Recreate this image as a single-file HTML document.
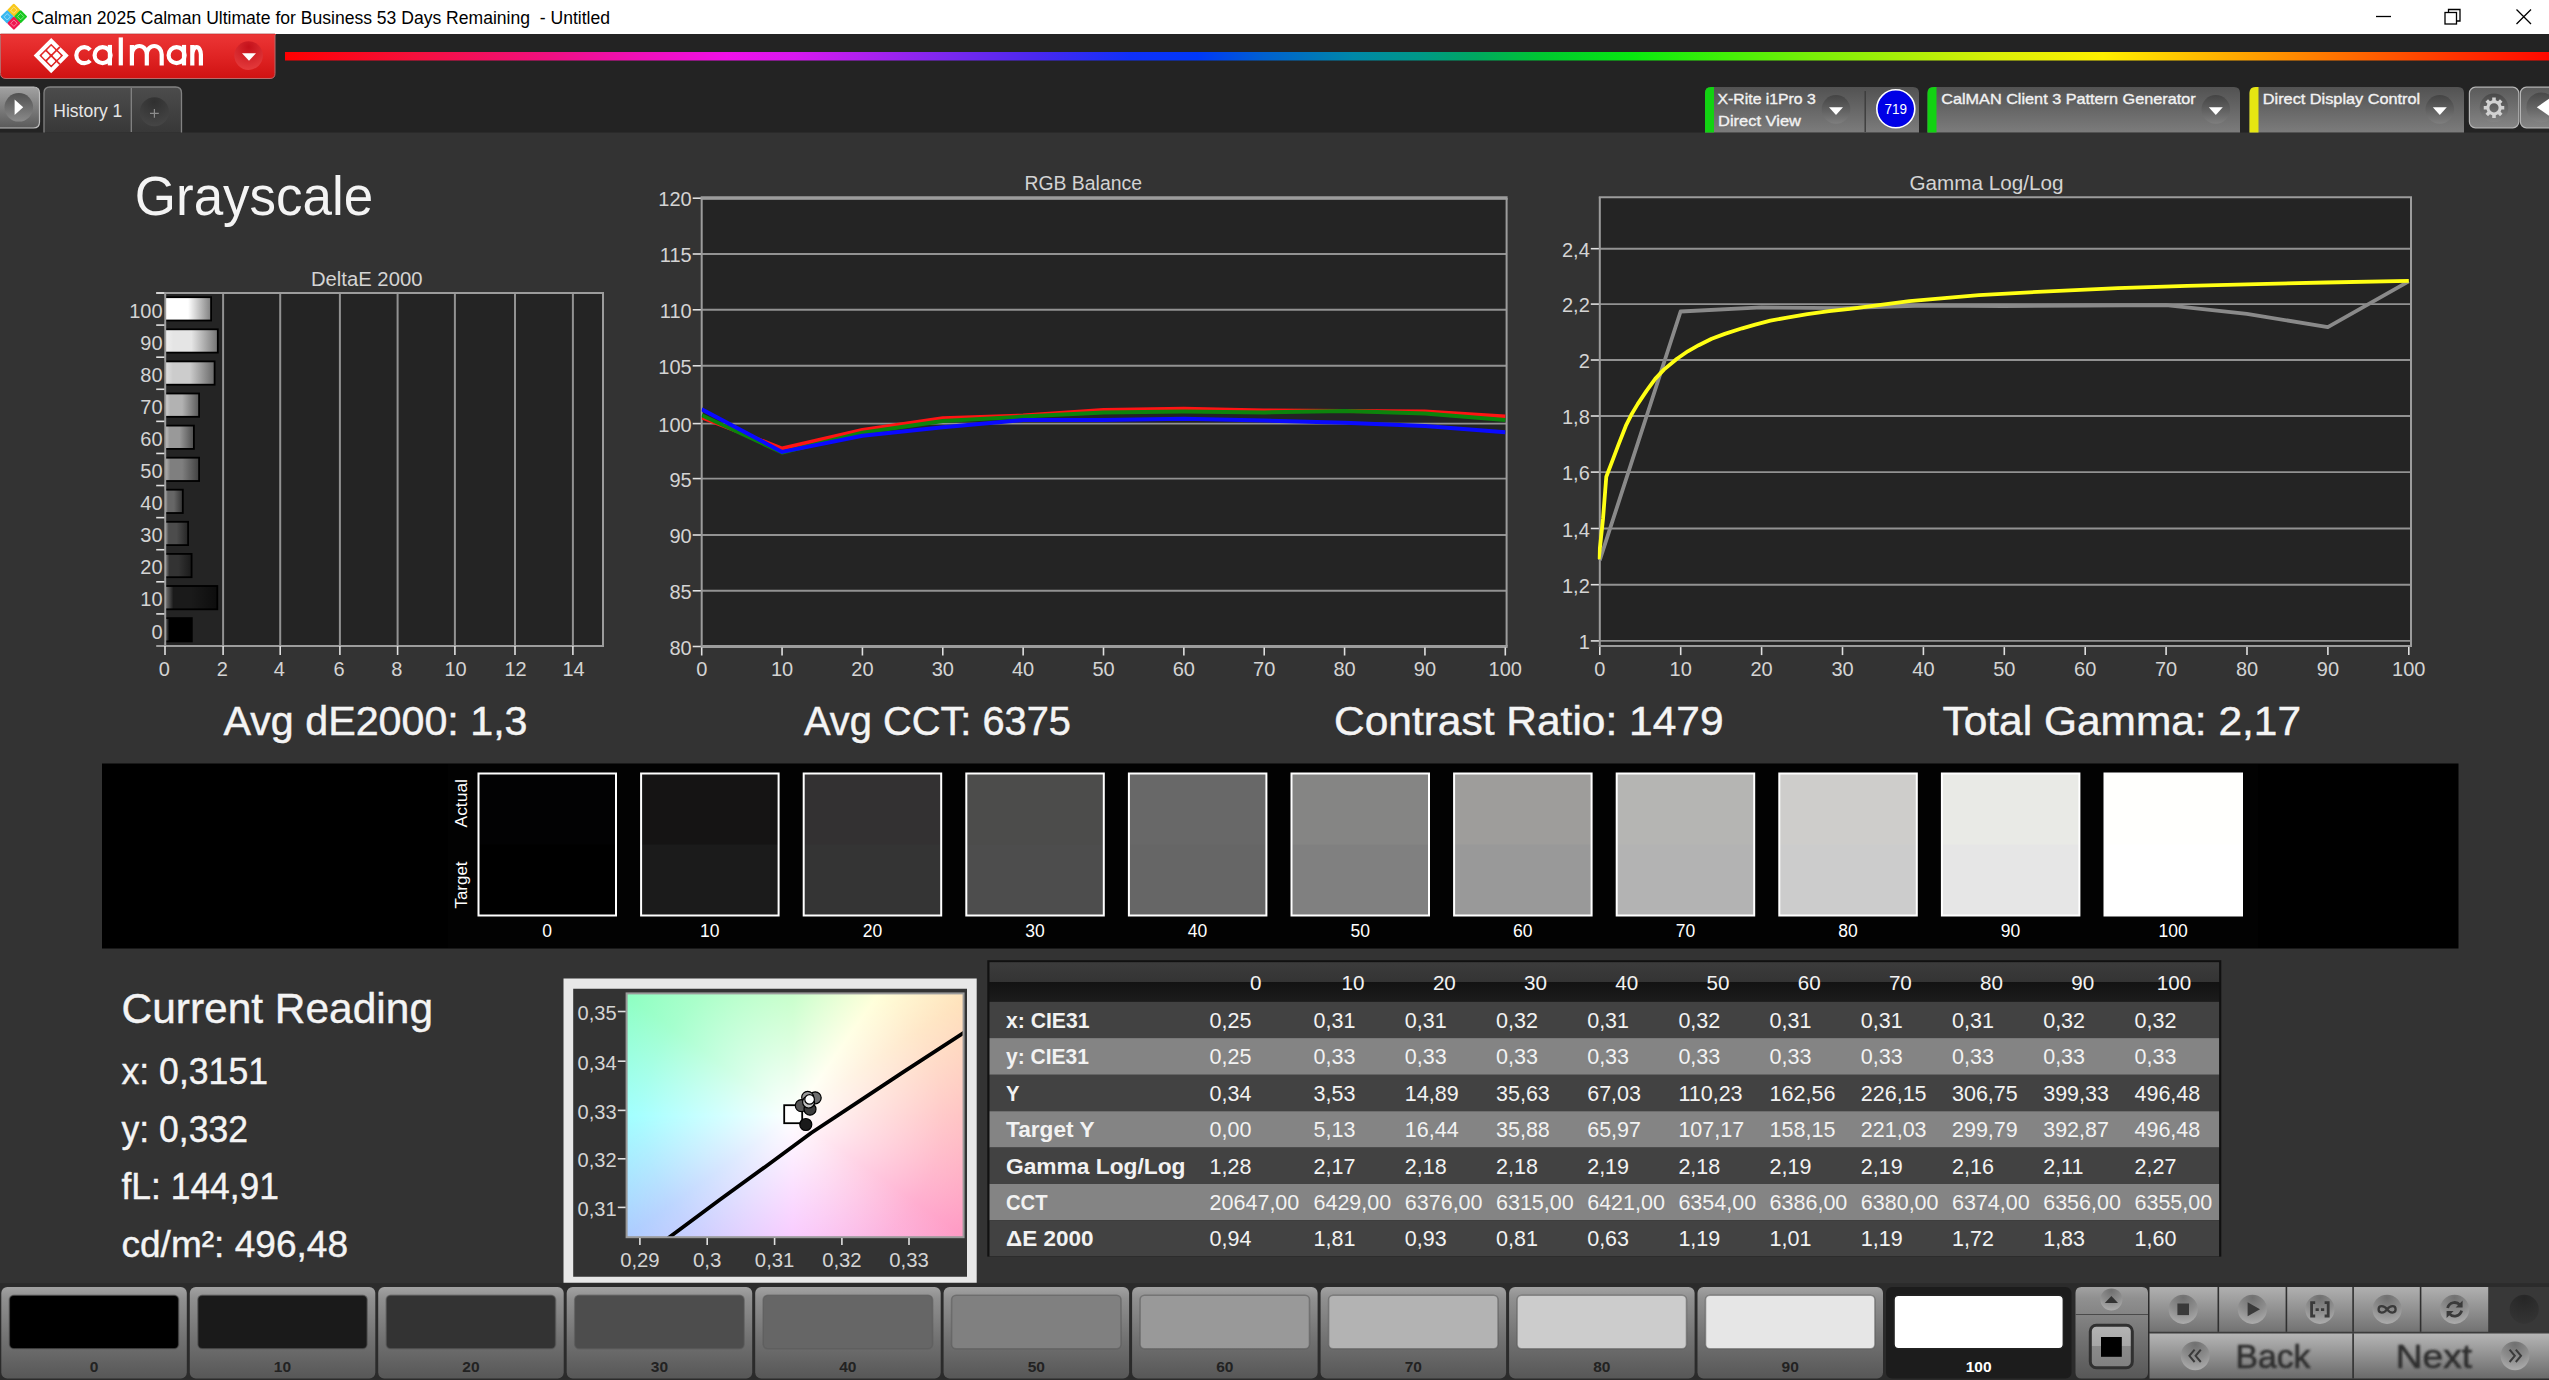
<!DOCTYPE html>
<html><head><meta charset="utf-8"><title>Calman 2025 - Grayscale</title>
<style>
html,body{margin:0;padding:0;background:#333;overflow:hidden}
body{width:2549px;height:1380px;position:relative;font-family:"Liberation Sans", sans-serif}
#cie{position:absolute;left:627px;top:994px;width:336px;height:243px;
background:
 radial-gradient(circle at 166px 122px, rgba(255,255,255,1) 0px, rgba(255,255,255,.66) 70px, rgba(255,255,255,.3) 150px, rgba(255,255,255,0) 245px),
 conic-gradient(from 0deg at 166px 122px, rgb(160,255,165) 0deg, rgb(255,255,200) 35deg, rgb(255,222,178) 56deg, rgb(255,178,178) 90deg, rgb(255,140,188) 125deg, rgb(244,165,255) 180deg, rgb(160,196,255) 234deg, rgb(130,255,255) 270deg, rgb(125,255,185) 306deg, rgb(160,255,165) 360deg);}
svg{position:absolute;left:0;top:0}
text{font-family:"Liberation Sans", sans-serif}
</style></head><body>
<div id="cie"></div>
<svg width="2549" height="1380" viewBox="0 0 2549 1380">
<defs>
<linearGradient id="spec" x1="0" y1="0" x2="1" y2="0"><stop offset="0" stop-color="#ff0000"/><stop offset="0.057" stop-color="#f5103c"/><stop offset="0.116" stop-color="#f01080"/><stop offset="0.156" stop-color="#f010b8"/><stop offset="0.195" stop-color="#f010e8"/><stop offset="0.225" stop-color="#d818f0"/><stop offset="0.254" stop-color="#b020f0"/><stop offset="0.294" stop-color="#7828f0"/><stop offset="0.333" stop-color="#4828f0"/><stop offset="0.373" stop-color="#1030f8"/><stop offset="0.403" stop-color="#0038f8"/><stop offset="0.432" stop-color="#0060d0"/><stop offset="0.472" stop-color="#0088a8"/><stop offset="0.501" stop-color="#009888"/><stop offset="0.526" stop-color="#00a860"/><stop offset="0.556" stop-color="#00c830"/><stop offset="0.595" stop-color="#08e810"/><stop offset="0.635" stop-color="#40f008"/><stop offset="0.674" stop-color="#78f008"/><stop offset="0.714" stop-color="#a8f008"/><stop offset="0.753" stop-color="#d8f008"/><stop offset="0.803" stop-color="#fff000"/><stop offset="0.842" stop-color="#ffc000"/><stop offset="0.882" stop-color="#ff9000"/><stop offset="0.921" stop-color="#ff6000"/><stop offset="0.961" stop-color="#ff3000"/><stop offset="1" stop-color="#ff0800"/></linearGradient>
<linearGradient id="specsh" x1="0" y1="0" x2="0" y2="1"><stop offset="0" stop-color="#232323"/><stop offset="0.18" stop-color="#232323"/><stop offset="0.18" stop-color="rgba(35,35,35,0)"/><stop offset="0.85" stop-color="rgba(35,35,35,0)"/><stop offset="1" stop-color="rgba(35,35,35,.6)"/></linearGradient>
<linearGradient id="redb" x1="0" y1="0" x2="0" y2="1"><stop offset="0" stop-color="#ec3636"/><stop offset="0.5" stop-color="#e02424"/><stop offset="1" stop-color="#cf1212"/></linearGradient>
<radialGradient id="redc" cx=".5" cy=".2" r=".9"><stop offset="0" stop-color="#c4101a"/><stop offset="1" stop-color="#e84040"/></radialGradient>
<linearGradient id="playb" x1="0" y1="0" x2="0" y2="1"><stop offset="0" stop-color="#a2a2a2"/><stop offset="1" stop-color="#5a5a5a"/></linearGradient>
<linearGradient id="pcirc" x1="0" y1="0" x2="0" y2="1"><stop offset="0" stop-color="#505050"/><stop offset="1" stop-color="#8a8a8a"/></linearGradient>
<linearGradient id="htab" x1="0" y1="0" x2="0" y2="1"><stop offset="0" stop-color="#4c4c4c"/><stop offset="1" stop-color="#383838"/></linearGradient>
<radialGradient id="hcirc" cx=".5" cy=".15" r=".95"><stop offset="0" stop-color="#303030"/><stop offset="1" stop-color="#484848"/></radialGradient>
<linearGradient id="dtab" x1="0" y1="0" x2="0" y2="1"><stop offset="0" stop-color="#525252"/><stop offset="1" stop-color="#7c7c7c"/></linearGradient>
<linearGradient id="dcirc" x1="0" y1="0" x2="0" y2="1"><stop offset="0" stop-color="#444444"/><stop offset="0.55" stop-color="#626262"/><stop offset="1" stop-color="#7e7e7e"/></linearGradient>
<linearGradient id="gbtn" x1="0" y1="0" x2="0" y2="1"><stop offset="0" stop-color="#5a5a5a"/><stop offset="1" stop-color="#858585"/></linearGradient>
<linearGradient id="gcirc" x1="0" y1="0" x2="0" y2="1"><stop offset="0" stop-color="#484848"/><stop offset="0.55" stop-color="#666666"/><stop offset="1" stop-color="#848484"/></linearGradient>
<linearGradient id="bar100" x1="0" y1="0" x2="1" y2="0"><stop offset="0" stop-color="#ffffff"/><stop offset="0.16" stop-color="#ffffff"/><stop offset="0.5" stop-color="#ffffff"/><stop offset="1" stop-color="#7f7f7f"/></linearGradient>
<linearGradient id="bar90" x1="0" y1="0" x2="1" y2="0"><stop offset="0" stop-color="#f0f0f0"/><stop offset="0.16" stop-color="#e5e5e5"/><stop offset="0.5" stop-color="#e5e5e5"/><stop offset="1" stop-color="#737373"/></linearGradient>
<linearGradient id="bar80" x1="0" y1="0" x2="1" y2="0"><stop offset="0" stop-color="#e1e1e1"/><stop offset="0.16" stop-color="#cccccc"/><stop offset="0.5" stop-color="#cccccc"/><stop offset="1" stop-color="#666666"/></linearGradient>
<linearGradient id="bar70" x1="0" y1="0" x2="1" y2="0"><stop offset="0" stop-color="#d3d3d3"/><stop offset="0.16" stop-color="#b2b2b2"/><stop offset="0.5" stop-color="#b2b2b2"/><stop offset="1" stop-color="#595959"/></linearGradient>
<linearGradient id="bar60" x1="0" y1="0" x2="1" y2="0"><stop offset="0" stop-color="#c4c4c4"/><stop offset="0.16" stop-color="#999999"/><stop offset="0.5" stop-color="#999999"/><stop offset="1" stop-color="#4c4c4c"/></linearGradient>
<linearGradient id="bar50" x1="0" y1="0" x2="1" y2="0"><stop offset="0" stop-color="#b5b5b5"/><stop offset="0.16" stop-color="#7f7f7f"/><stop offset="0.5" stop-color="#7f7f7f"/><stop offset="1" stop-color="#404040"/></linearGradient>
<linearGradient id="bar40" x1="0" y1="0" x2="1" y2="0"><stop offset="0" stop-color="#a6a6a6"/><stop offset="0.16" stop-color="#666666"/><stop offset="0.5" stop-color="#666666"/><stop offset="1" stop-color="#333333"/></linearGradient>
<linearGradient id="bar30" x1="0" y1="0" x2="1" y2="0"><stop offset="0" stop-color="#979797"/><stop offset="0.16" stop-color="#4c4c4c"/><stop offset="0.5" stop-color="#4c4c4c"/><stop offset="1" stop-color="#262626"/></linearGradient>
<linearGradient id="bar20" x1="0" y1="0" x2="1" y2="0"><stop offset="0" stop-color="#898989"/><stop offset="0.16" stop-color="#333333"/><stop offset="0.5" stop-color="#333333"/><stop offset="1" stop-color="#1a1a1a"/></linearGradient>
<linearGradient id="bar10" x1="0" y1="0" x2="1" y2="0"><stop offset="0" stop-color="#7a7a7a"/><stop offset="0.16" stop-color="#1a1a1a"/><stop offset="0.5" stop-color="#1a1a1a"/><stop offset="1" stop-color="#0d0d0d"/></linearGradient>
<linearGradient id="bar0" x1="0" y1="0" x2="1" y2="0"><stop offset="0" stop-color="#6b6b6b"/><stop offset="0.16" stop-color="#000000"/><stop offset="0.5" stop-color="#000000"/><stop offset="1" stop-color="#000000"/></linearGradient>
<linearGradient id="thead" x1="0" y1="0" x2="0" y2="1"><stop offset="0" stop-color="#3c3c3c"/><stop offset="0.49" stop-color="#343434"/><stop offset="0.5" stop-color="#121212"/><stop offset="1" stop-color="#1c1c1c"/></linearGradient>
<linearGradient id="lvb" x1="0" y1="0" x2="0" y2="1"><stop offset="0" stop-color="#a2a2a2"/><stop offset="0.12" stop-color="#909090"/><stop offset="0.6" stop-color="#707070"/><stop offset="1" stop-color="#575757"/></linearGradient>
<linearGradient id="bbtn" x1="0" y1="0" x2="0" y2="1"><stop offset="0" stop-color="#b0b0b0"/><stop offset="1" stop-color="#727272"/></linearGradient>
<linearGradient id="bbtn2" x1="0" y1="0" x2="0" y2="1"><stop offset="0" stop-color="#b6b6b6"/><stop offset="1" stop-color="#6a6a6a"/></linearGradient>
<radialGradient id="bcirc" cx=".5" cy=".1" r="1"><stop offset="0" stop-color="#707070"/><stop offset=".5" stop-color="#8c8c8c"/><stop offset="1" stop-color="#b4b4b4"/></radialGradient>
<linearGradient id="stopin" x1="0" y1="0" x2="0" y2="1"><stop offset="0" stop-color="#b4b4b4"/><stop offset="0.5" stop-color="#a6a6a6"/><stop offset="0.5" stop-color="#8a8a8a"/><stop offset="1" stop-color="#808080"/></linearGradient>
<radialGradient id="dkc" cx=".5" cy=".1" r="1"><stop offset="0" stop-color="#262626"/><stop offset="1" stop-color="#363636"/></radialGradient>
<filter id="blur1" x="-10%" y="-20%" width="120%" height="140%"><feGaussianBlur stdDeviation="0.9"/></filter>
</defs>
<rect x="0" y="0" width="2549" height="34" fill="#ffffff"/>
<path d="M13.8 4.799999999999999 L19.200000000000003 10.2 L13.8 15.6 L8.4 10.2 Z" fill="#f8c81c" stroke="#f8c81c" stroke-width="2" stroke-linejoin="round"/>
<path d="M13.8 6.999999999999999 L17.0 10.2 L13.8 13.399999999999999 L10.600000000000001 10.2 Z" fill="none" stroke="#ffffff" stroke-opacity=".5" stroke-width="0.9"/>
<path d="M7.2 11.4 L12.600000000000001 16.8 L7.2 22.200000000000003 L1.7999999999999998 16.8 Z" fill="#38b8f0" stroke="#38b8f0" stroke-width="2" stroke-linejoin="round"/>
<path d="M7.2 13.600000000000001 L10.4 16.8 L7.2 20.0 L4.0 16.8 Z" fill="none" stroke="#ffffff" stroke-opacity=".5" stroke-width="0.9"/>
<path d="M20.6 11.200000000000001 L26.0 16.6 L20.6 22.0 L15.200000000000001 16.6 Z" fill="#18c820" stroke="#18c820" stroke-width="2" stroke-linejoin="round"/>
<path d="M20.6 13.400000000000002 L23.8 16.6 L20.6 19.8 L17.400000000000002 16.6 Z" fill="none" stroke="#ffffff" stroke-opacity=".5" stroke-width="0.9"/>
<path d="M13.9 17.799999999999997 L19.3 23.2 L13.9 28.6 L8.5 23.2 Z" fill="#f01850" stroke="#f01850" stroke-width="2" stroke-linejoin="round"/>
<path d="M13.9 20.0 L17.1 23.2 L13.9 26.4 L10.7 23.2 Z" fill="none" stroke="#ffffff" stroke-opacity=".5" stroke-width="0.9"/>
<text x="31.5" y="23.8" font-size="18.3" fill="#000" textLength="578.5" lengthAdjust="spacingAndGlyphs" style="white-space:pre">Calman 2025 Calman Ultimate for Business 53 Days Remaining  - Untitled</text>
<line x1="2376" y1="16.5" x2="2391" y2="16.5" stroke="#000" stroke-width="1.3"/>
<rect x="2445" y="12.5" width="11.5" height="11.5" fill="none" stroke="#000" stroke-width="1.3"/>
<path d="M2448.5 12.5 V9.5 H2460 V21 H2456.5" fill="none" stroke="#000" stroke-width="1.3"/>
<path d="M2516.5 9.5 L2531 24 M2531 9.5 L2516.5 24" fill="none" stroke="#000" stroke-width="1.3"/>
<rect x="0" y="34" width="2549" height="98.5" fill="#232323"/>
<rect x="285" y="52" width="2264" height="8.5" fill="url(#spec)"/>
<rect x="285" y="52" width="2264" height="8.5" fill="url(#specsh)" opacity=".0"/>
<path d="M0.5 34 H275 V73.5 Q275 78.5 270 78.5 H6 Q0.5 78.5 0.5 73.5 Z" fill="url(#redb)" stroke="#b86a6a" stroke-width="1"/>
<rect x="0" y="34" width="276" height="1" fill="#e23030"/>
<g transform="translate(51.2 55.6) rotate(45)" fill="#fff"><path d="M-12.4 -12.4 H12.4 V12.4 H-12.4 Z M-8.4 -8.4 V8.4 H8.4 V-8.4 Z" fill-rule="evenodd"/><rect x="-7.0" y="-7.0" width="6.2" height="6.2" rx="1"/><rect x="0.8" y="-7.0" width="6.2" height="6.2" rx="1"/><rect x="-7.0" y="0.8" width="6.2" height="6.2" rx="1"/><rect x="0.8" y="0.8" width="6.2" height="6.2" rx="1"/><rect x="-0.9" y="-12.4" width="1.8" height="5" fill="#e22a2a"/><rect x="7.4" y="-0.9" width="5" height="1.8" fill="#e22a2a"/></g>
<g fill="none" stroke="#fff" stroke-width="4.2"><path d="M90.2 49.8 A8 8 0 1 0 90.2 60.6"/><circle cx="102.6" cy="55.2" r="8"/><path d="M109.9 44.9 V65.4"/><path d="M120.8 37.4 V65.4"/><path d="M131.9 65.4 V44.9 M131.9 54.5 A6.3 7.2 0 0 1 146.8 54.5 V65.4 M146.8 54.5 A6.3 7.2 0 0 1 161.7 54.5 V65.4"/><circle cx="176.6" cy="55.2" r="8"/><path d="M184 44.9 V65.4"/><path d="M192.3 65.4 V44.9 M192.3 54.6 A4.3 7.4 0 0 1 200.9 54.6 V65.4" /></g>
<circle cx="248.6" cy="55.6" r="14.3" fill="url(#redc)"/>
<path d="M242 53.3 H256 L249 60.8 Z" fill="#fff"/>
<path d="M-2 87 H33.5 Q39.5 87 39.5 93 V122 Q39.5 128 33.5 128 H-2 Z" fill="url(#playb)" stroke="#c0c0c0" stroke-width="1.2"/>
<circle cx="18.8" cy="107.3" r="14.3" fill="url(#pcirc)"/>
<path d="M14.6 99.6 L23.2 107.3 L14.6 115 Z" fill="#fff"/>
<path d="M44 132.5 V93 Q44 87 50 87 H175.5 Q181.5 87 181.5 93 V132.5 Z" fill="url(#htab)"/>
<path d="M44 132.5 V93 Q44 87 50 87 H175.5 Q181.5 87 181.5 93 V132.5" fill="none" stroke="#828282" stroke-width="1.3"/>
<line x1="131.3" y1="88" x2="131.3" y2="132" stroke="#848484" stroke-width="1.3"/>
<text x="53.3" y="116.8" font-size="18.6" fill="#e6e6e6" textLength="69" lengthAdjust="spacingAndGlyphs">History 1</text>
<circle cx="154.4" cy="111.8" r="14.5" fill="url(#hcirc)"/>
<path d="M150 113.4 H158.8 M154.4 109 V117.8" stroke="#8c8c8c" stroke-width="1.2" fill="none"/>
<path d="M1705 132.5 V93 Q1705 87 1711 87 H1913 Q1919 87 1919 93 V132.5 Z" fill="url(#dtab)"/>
<path d="M1705 132.5 V93 Q1705 87 1711 87 H1714 V132.5 Z" fill="#12d212"/>
<text x="1717.6" y="103.8" font-size="14.8" fill="#f2f2f2" textLength="98.2" lengthAdjust="spacingAndGlyphs" stroke="#f2f2f2" stroke-width=".35">X-Rite i1Pro 3</text>
<text x="1718" y="125.7" font-size="14.8" fill="#f2f2f2" textLength="83" lengthAdjust="spacingAndGlyphs" stroke="#f2f2f2" stroke-width=".35">Direct View</text>
<circle cx="1836" cy="109.4" r="14.3" fill="url(#dcirc)"/>
<path d="M1829 107.2 H1843 L1836 115.0 Z" fill="#fff"/>
<line x1="1865.2" y1="91" x2="1865.2" y2="132" stroke="#3c3c3c" stroke-width="1.4"/>
<circle cx="1895.8" cy="108.8" r="19" fill="#0000e6" stroke="#fff" stroke-width="1.6"/>
<text x="1895.8" y="114.2" font-size="15" fill="#fff" text-anchor="middle" textLength="22.5" lengthAdjust="spacingAndGlyphs">719</text>
<path d="M1927.5 132.5 V93 Q1927.5 87 1933.5 87 H2234 Q2240 87 2240 93 V132.5 Z" fill="url(#dtab)"/>
<path d="M1927.5 132.5 V93 Q1927.5 87 1933.5 87 H1936.5 V132.5 Z" fill="#12d212"/>
<text x="1941.2" y="103.8" font-size="14.8" fill="#f2f2f2" textLength="254.5" lengthAdjust="spacingAndGlyphs" stroke="#f2f2f2" stroke-width=".35">CalMAN Client 3 Pattern Generator</text>
<circle cx="2215.8" cy="109.4" r="14.3" fill="url(#dcirc)"/>
<path d="M2208.8 107.2 H2222.8 L2215.8 115.0 Z" fill="#fff"/>
<path d="M2249.5 132.5 V93 Q2249.5 87 2255.5 87 H2458 Q2464 87 2464 93 V132.5 Z" fill="url(#dtab)"/>
<path d="M2249.5 132.5 V93 Q2249.5 87 2255.5 87 H2258.5 V132.5 Z" fill="#e6e612"/>
<text x="2262.8" y="103.8" font-size="14.8" fill="#f2f2f2" textLength="157.4" lengthAdjust="spacingAndGlyphs" stroke="#f2f2f2" stroke-width=".35">Direct Display Control</text>
<circle cx="2439.8" cy="109.4" r="14.3" fill="url(#dcirc)"/>
<path d="M2432.8 107.2 H2446.8 L2439.8 115.0 Z" fill="#fff"/>
<rect x="2469.4" y="87.2" width="49.4" height="40.6" rx="6" fill="url(#gbtn)" stroke="#b4b4b4" stroke-width="1.2"/>
<rect x="2520.4" y="87.2" width="49.4" height="40.6" rx="6" fill="url(#gbtn)" stroke="#b4b4b4" stroke-width="1.2"/>
<circle cx="2494" cy="107.8" r="14.3" fill="url(#gcirc)"/>
<circle cx="2541.4" cy="107.4" r="15" fill="url(#gcirc)"/>
<path d="M2504.25 106.01 L2504.25 109.59 L2501.49 109.60 L2500.57 111.82 L2502.51 113.78 L2499.98 116.31 L2498.02 114.37 L2495.80 115.29 L2495.79 118.05 L2492.21 118.05 L2492.20 115.29 L2489.98 114.37 L2488.02 116.31 L2485.49 113.78 L2487.43 111.82 L2486.51 109.60 L2483.75 109.59 L2483.75 106.01 L2486.51 106.00 L2487.43 103.78 L2485.49 101.82 L2488.02 99.29 L2489.98 101.23 L2492.20 100.31 L2492.21 97.55 L2495.79 97.55 L2495.80 100.31 L2498.02 101.23 L2499.98 99.29 L2502.51 101.82 L2500.57 103.78 L2501.49 106.00 Z M2498.6 107.8 A4.6 4.6 0 1 0 2489.4 107.8 A4.6 4.6 0 1 0 2498.6 107.8 Z" fill="#d2d2d2" fill-rule="evenodd"/>
<path d="M2551 97.4 L2536.8 107.3 L2551 117.2 Z" fill="#fff"/>
<text x="134.8" y="215" font-size="55.4" fill="#f4f4f4" textLength="238.5" lengthAdjust="spacingAndGlyphs">Grayscale</text>
<text x="366.7" y="285.6" font-size="19.3" fill="#d4d4d4" text-anchor="middle" textLength="111.5" lengthAdjust="spacingAndGlyphs">DeltaE 2000</text>
<rect x="165.2" y="293" width="437.8" height="353" fill="#242424"/>
<line x1="223.1" y1="293" x2="223.1" y2="646" stroke="#929292" stroke-width="2"/>
<line x1="280.2" y1="293" x2="280.2" y2="646" stroke="#929292" stroke-width="2"/>
<line x1="339.9" y1="293" x2="339.9" y2="646" stroke="#929292" stroke-width="2"/>
<line x1="397.6" y1="293" x2="397.6" y2="646" stroke="#929292" stroke-width="2"/>
<line x1="454.9" y1="293" x2="454.9" y2="646" stroke="#929292" stroke-width="2"/>
<line x1="515" y1="293" x2="515" y2="646" stroke="#929292" stroke-width="2"/>
<line x1="572.9" y1="293" x2="572.9" y2="646" stroke="#929292" stroke-width="2"/>
<line x1="156.2" y1="293" x2="604" y2="293" stroke="#9c9c9c" stroke-width="2"/>
<line x1="603" y1="293" x2="603" y2="646" stroke="#9c9c9c" stroke-width="2"/>
<line x1="156.2" y1="646" x2="604" y2="646" stroke="#9c9c9c" stroke-width="2"/>
<line x1="156.2" y1="293.0" x2="165.2" y2="293.0" stroke="#e0e0e0" stroke-width="1.6"/>
<rect x="165.0" y="297.2" width="46.1" height="23.3" fill="url(#bar100)" stroke="#000" stroke-width="1.8"/>
<text x="162.6" y="317.6454545454546" font-size="20" fill="#d4d4d4" text-anchor="end">100</text>
<line x1="156.2" y1="325.0909090909091" x2="165.2" y2="325.0909090909091" stroke="#e0e0e0" stroke-width="1.6"/>
<rect x="165.0" y="329.3" width="52.8" height="23.3" fill="url(#bar90)" stroke="#000" stroke-width="1.8"/>
<text x="162.6" y="349.7363636363637" font-size="20" fill="#d4d4d4" text-anchor="end">90</text>
<line x1="156.2" y1="357.1818181818182" x2="165.2" y2="357.1818181818182" stroke="#e0e0e0" stroke-width="1.6"/>
<rect x="165.0" y="361.4" width="49.6" height="23.3" fill="url(#bar80)" stroke="#000" stroke-width="1.8"/>
<text x="162.6" y="381.82727272727277" font-size="20" fill="#d4d4d4" text-anchor="end">80</text>
<line x1="156.2" y1="389.27272727272725" x2="165.2" y2="389.27272727272725" stroke="#e0e0e0" stroke-width="1.6"/>
<rect x="165.0" y="393.5" width="34.1" height="23.3" fill="url(#bar70)" stroke="#000" stroke-width="1.8"/>
<text x="162.6" y="413.91818181818184" font-size="20" fill="#d4d4d4" text-anchor="end">70</text>
<line x1="156.2" y1="421.3636363636364" x2="165.2" y2="421.3636363636364" stroke="#e0e0e0" stroke-width="1.6"/>
<rect x="165.0" y="425.6" width="28.9" height="23.3" fill="url(#bar60)" stroke="#000" stroke-width="1.8"/>
<text x="162.6" y="446.00909090909096" font-size="20" fill="#d4d4d4" text-anchor="end">60</text>
<line x1="156.2" y1="453.4545454545455" x2="165.2" y2="453.4545454545455" stroke="#e0e0e0" stroke-width="1.6"/>
<rect x="165.0" y="457.7" width="34.1" height="23.3" fill="url(#bar50)" stroke="#000" stroke-width="1.8"/>
<text x="162.6" y="478.1000000000001" font-size="20" fill="#d4d4d4" text-anchor="end">50</text>
<line x1="156.2" y1="485.54545454545456" x2="165.2" y2="485.54545454545456" stroke="#e0e0e0" stroke-width="1.6"/>
<rect x="165.0" y="489.7" width="17.8" height="23.3" fill="url(#bar40)" stroke="#000" stroke-width="1.8"/>
<text x="162.6" y="510.19090909090914" font-size="20" fill="#d4d4d4" text-anchor="end">40</text>
<line x1="156.2" y1="517.6363636363636" x2="165.2" y2="517.6363636363636" stroke="#e0e0e0" stroke-width="1.6"/>
<rect x="165.0" y="521.8" width="23.1" height="23.3" fill="url(#bar30)" stroke="#000" stroke-width="1.8"/>
<text x="162.6" y="542.2818181818182" font-size="20" fill="#d4d4d4" text-anchor="end">30</text>
<line x1="156.2" y1="549.7272727272727" x2="165.2" y2="549.7272727272727" stroke="#e0e0e0" stroke-width="1.6"/>
<rect x="165.0" y="553.9" width="26.6" height="23.3" fill="url(#bar20)" stroke="#000" stroke-width="1.8"/>
<text x="162.6" y="574.3727272727273" font-size="20" fill="#d4d4d4" text-anchor="end">20</text>
<line x1="156.2" y1="581.8181818181819" x2="165.2" y2="581.8181818181819" stroke="#e0e0e0" stroke-width="1.6"/>
<rect x="165.0" y="586.0" width="52.3" height="23.3" fill="url(#bar10)" stroke="#000" stroke-width="1.8"/>
<text x="162.6" y="606.4636363636364" font-size="20" fill="#d4d4d4" text-anchor="end">10</text>
<line x1="156.2" y1="613.909090909091" x2="165.2" y2="613.909090909091" stroke="#e0e0e0" stroke-width="1.6"/>
<rect x="165.0" y="618.1" width="26.8" height="23.3" fill="url(#bar0)" stroke="#000" stroke-width="1.8"/>
<text x="162.6" y="638.5545454545455" font-size="20" fill="#d4d4d4" text-anchor="end">0</text>
<line x1="165.2" y1="292" x2="165.2" y2="647" stroke="#9c9c9c" stroke-width="2"/>
<line x1="165" y1="646" x2="165" y2="655" stroke="#e0e0e0" stroke-width="1.6"/>
<text x="164.2" y="676.3" font-size="20" fill="#d4d4d4" text-anchor="middle">0</text>
<line x1="223.1" y1="646" x2="223.1" y2="655" stroke="#e0e0e0" stroke-width="1.6"/>
<text x="222.29999999999998" y="676.3" font-size="20" fill="#d4d4d4" text-anchor="middle">2</text>
<line x1="280.2" y1="646" x2="280.2" y2="655" stroke="#e0e0e0" stroke-width="1.6"/>
<text x="279.4" y="676.3" font-size="20" fill="#d4d4d4" text-anchor="middle">4</text>
<line x1="339.9" y1="646" x2="339.9" y2="655" stroke="#e0e0e0" stroke-width="1.6"/>
<text x="339.09999999999997" y="676.3" font-size="20" fill="#d4d4d4" text-anchor="middle">6</text>
<line x1="397.6" y1="646" x2="397.6" y2="655" stroke="#e0e0e0" stroke-width="1.6"/>
<text x="396.8" y="676.3" font-size="20" fill="#d4d4d4" text-anchor="middle">8</text>
<line x1="454.9" y1="646" x2="454.9" y2="655" stroke="#e0e0e0" stroke-width="1.6"/>
<text x="455.5" y="676.3" font-size="20" fill="#d4d4d4" text-anchor="middle">10</text>
<line x1="515" y1="646" x2="515" y2="655" stroke="#e0e0e0" stroke-width="1.6"/>
<text x="515.6" y="676.3" font-size="20" fill="#d4d4d4" text-anchor="middle">12</text>
<line x1="572.9" y1="646" x2="572.9" y2="655" stroke="#e0e0e0" stroke-width="1.6"/>
<text x="573.5" y="676.3" font-size="20" fill="#d4d4d4" text-anchor="middle">14</text>
<rect x="701.7" y="198" width="804.8999999999999" height="448.5" fill="#242424"/>
<line x1="701.7" y1="198.2" x2="1506.6" y2="198.2" stroke="#929292" stroke-width="1.9"/>
<line x1="692.7" y1="198.2" x2="701.7" y2="198.2" stroke="#e0e0e0" stroke-width="1.6"/>
<text x="691.7" y="206.39999999999998" font-size="20" fill="#d4d4d4" text-anchor="end">120</text>
<line x1="701.7" y1="254" x2="1506.6" y2="254" stroke="#929292" stroke-width="1.9"/>
<line x1="692.7" y1="254" x2="701.7" y2="254" stroke="#e0e0e0" stroke-width="1.6"/>
<text x="691.7" y="262.2" font-size="20" fill="#d4d4d4" text-anchor="end">115</text>
<line x1="701.7" y1="309.8" x2="1506.6" y2="309.8" stroke="#929292" stroke-width="1.9"/>
<line x1="692.7" y1="309.8" x2="701.7" y2="309.8" stroke="#e0e0e0" stroke-width="1.6"/>
<text x="691.7" y="318.0" font-size="20" fill="#d4d4d4" text-anchor="end">110</text>
<line x1="701.7" y1="365.8" x2="1506.6" y2="365.8" stroke="#929292" stroke-width="1.9"/>
<line x1="692.7" y1="365.8" x2="701.7" y2="365.8" stroke="#e0e0e0" stroke-width="1.6"/>
<text x="691.7" y="374.0" font-size="20" fill="#d4d4d4" text-anchor="end">105</text>
<line x1="701.7" y1="423.6" x2="1506.6" y2="423.6" stroke="#929292" stroke-width="1.9"/>
<line x1="692.7" y1="423.6" x2="701.7" y2="423.6" stroke="#e0e0e0" stroke-width="1.6"/>
<text x="691.7" y="431.8" font-size="20" fill="#d4d4d4" text-anchor="end">100</text>
<line x1="701.7" y1="478.6" x2="1506.6" y2="478.6" stroke="#929292" stroke-width="1.9"/>
<line x1="692.7" y1="478.6" x2="701.7" y2="478.6" stroke="#e0e0e0" stroke-width="1.6"/>
<text x="691.7" y="486.8" font-size="20" fill="#d4d4d4" text-anchor="end">95</text>
<line x1="701.7" y1="535" x2="1506.6" y2="535" stroke="#929292" stroke-width="1.9"/>
<line x1="692.7" y1="535" x2="701.7" y2="535" stroke="#e0e0e0" stroke-width="1.6"/>
<text x="691.7" y="543.2" font-size="20" fill="#d4d4d4" text-anchor="end">90</text>
<line x1="701.7" y1="590.8" x2="1506.6" y2="590.8" stroke="#929292" stroke-width="1.9"/>
<line x1="692.7" y1="590.8" x2="701.7" y2="590.8" stroke="#e0e0e0" stroke-width="1.6"/>
<text x="691.7" y="599.0" font-size="20" fill="#d4d4d4" text-anchor="end">85</text>
<line x1="701.7" y1="646.5" x2="1506.6" y2="646.5" stroke="#929292" stroke-width="1.9"/>
<line x1="692.7" y1="646.5" x2="701.7" y2="646.5" stroke="#e0e0e0" stroke-width="1.6"/>
<text x="691.7" y="654.7" font-size="20" fill="#d4d4d4" text-anchor="end">80</text>
<line x1="700.7" y1="198" x2="1507.6" y2="198" stroke="#9c9c9c" stroke-width="3.4"/>
<line x1="700.7" y1="646.5" x2="1507.6" y2="646.5" stroke="#9c9c9c" stroke-width="3"/>
<line x1="701.7" y1="198" x2="701.7" y2="646.5" stroke="#9c9c9c" stroke-width="2"/>
<line x1="1506.6" y1="198" x2="1506.6" y2="646.5" stroke="#9c9c9c" stroke-width="2"/>
<line x1="701.7" y1="647.5" x2="701.7" y2="655.5" stroke="#e0e0e0" stroke-width="1.6"/>
<text x="701.7" y="676.3" font-size="20" fill="#d4d4d4" text-anchor="middle">0</text>
<line x1="782.0600000000001" y1="647.5" x2="782.0600000000001" y2="655.5" stroke="#e0e0e0" stroke-width="1.6"/>
<text x="782.0600000000001" y="676.3" font-size="20" fill="#d4d4d4" text-anchor="middle">10</text>
<line x1="862.4200000000001" y1="647.5" x2="862.4200000000001" y2="655.5" stroke="#e0e0e0" stroke-width="1.6"/>
<text x="862.4200000000001" y="676.3" font-size="20" fill="#d4d4d4" text-anchor="middle">20</text>
<line x1="942.78" y1="647.5" x2="942.78" y2="655.5" stroke="#e0e0e0" stroke-width="1.6"/>
<text x="942.78" y="676.3" font-size="20" fill="#d4d4d4" text-anchor="middle">30</text>
<line x1="1023.14" y1="647.5" x2="1023.14" y2="655.5" stroke="#e0e0e0" stroke-width="1.6"/>
<text x="1023.14" y="676.3" font-size="20" fill="#d4d4d4" text-anchor="middle">40</text>
<line x1="1103.5" y1="647.5" x2="1103.5" y2="655.5" stroke="#e0e0e0" stroke-width="1.6"/>
<text x="1103.5" y="676.3" font-size="20" fill="#d4d4d4" text-anchor="middle">50</text>
<line x1="1183.8600000000001" y1="647.5" x2="1183.8600000000001" y2="655.5" stroke="#e0e0e0" stroke-width="1.6"/>
<text x="1183.8600000000001" y="676.3" font-size="20" fill="#d4d4d4" text-anchor="middle">60</text>
<line x1="1264.2199999999998" y1="647.5" x2="1264.2199999999998" y2="655.5" stroke="#e0e0e0" stroke-width="1.6"/>
<text x="1264.2199999999998" y="676.3" font-size="20" fill="#d4d4d4" text-anchor="middle">70</text>
<line x1="1344.58" y1="647.5" x2="1344.58" y2="655.5" stroke="#e0e0e0" stroke-width="1.6"/>
<text x="1344.58" y="676.3" font-size="20" fill="#d4d4d4" text-anchor="middle">80</text>
<line x1="1424.94" y1="647.5" x2="1424.94" y2="655.5" stroke="#e0e0e0" stroke-width="1.6"/>
<text x="1424.94" y="676.3" font-size="20" fill="#d4d4d4" text-anchor="middle">90</text>
<line x1="1505.3" y1="647.5" x2="1505.3" y2="655.5" stroke="#e0e0e0" stroke-width="1.6"/>
<text x="1505.3" y="676.3" font-size="20" fill="#d4d4d4" text-anchor="middle">100</text>
<text x="1083.2" y="189.6" font-size="19.3" fill="#d4d4d4" text-anchor="middle" textLength="117.5" lengthAdjust="spacingAndGlyphs">RGB Balance</text>
<clipPath id="rclip"><rect x="701.7" y="198" width="805.8999999999999" height="448.5"/></clipPath>
<polyline points="701.7,417.5 782.1,448.5 862.4,430.0 942.8,418.3 1023.1,415.5 1103.5,409.9 1183.9,408.7 1264.2,410.4 1344.6,411.0 1424.9,411.6 1505.3,416.6" fill="none" stroke="#ff1414" stroke-width="4" stroke-linejoin="round" clip-path="url(#rclip)"/>
<polyline points="701.7,415.2 782.1,452.5 862.4,432.8 942.8,421.1 1023.1,416.6 1103.5,412.4 1183.9,411.6 1264.2,412.4 1344.6,411.0 1424.9,413.6 1505.3,420.0" fill="none" stroke="#0c840c" stroke-width="4" stroke-linejoin="round" clip-path="url(#rclip)"/>
<polyline points="701.7,409.3 782.1,451.9 862.4,435.7 942.8,427.2 1023.1,420.0 1103.5,420.0 1183.9,418.8 1264.2,420.5 1344.6,422.8 1424.9,426.1 1505.3,432.3" fill="none" stroke="#0a0aff" stroke-width="4" stroke-linejoin="round" clip-path="url(#rclip)"/>
<rect x="1599.8" y="197.3" width="811.2" height="448.8" fill="#242424"/>
<line x1="1599.8" y1="248.7" x2="2411" y2="248.7" stroke="#929292" stroke-width="1.9"/>
<line x1="1590.8" y1="248.7" x2="1599.8" y2="248.7" stroke="#e0e0e0" stroke-width="1.6"/>
<text x="1589.8" y="256.9" font-size="20" fill="#d4d4d4" text-anchor="end">2,4</text>
<line x1="1599.8" y1="304.1" x2="2411" y2="304.1" stroke="#929292" stroke-width="1.9"/>
<line x1="1590.8" y1="304.1" x2="1599.8" y2="304.1" stroke="#e0e0e0" stroke-width="1.6"/>
<text x="1589.8" y="312.3" font-size="20" fill="#d4d4d4" text-anchor="end">2,2</text>
<line x1="1599.8" y1="360" x2="2411" y2="360" stroke="#929292" stroke-width="1.9"/>
<line x1="1590.8" y1="360" x2="1599.8" y2="360" stroke="#e0e0e0" stroke-width="1.6"/>
<text x="1589.8" y="368.2" font-size="20" fill="#d4d4d4" text-anchor="end">2</text>
<line x1="1599.8" y1="416" x2="2411" y2="416" stroke="#929292" stroke-width="1.9"/>
<line x1="1590.8" y1="416" x2="1599.8" y2="416" stroke="#e0e0e0" stroke-width="1.6"/>
<text x="1589.8" y="424.2" font-size="20" fill="#d4d4d4" text-anchor="end">1,8</text>
<line x1="1599.8" y1="472.1" x2="2411" y2="472.1" stroke="#929292" stroke-width="1.9"/>
<line x1="1590.8" y1="472.1" x2="1599.8" y2="472.1" stroke="#e0e0e0" stroke-width="1.6"/>
<text x="1589.8" y="480.3" font-size="20" fill="#d4d4d4" text-anchor="end">1,6</text>
<line x1="1599.8" y1="528.5" x2="2411" y2="528.5" stroke="#929292" stroke-width="1.9"/>
<line x1="1590.8" y1="528.5" x2="1599.8" y2="528.5" stroke="#e0e0e0" stroke-width="1.6"/>
<text x="1589.8" y="536.7" font-size="20" fill="#d4d4d4" text-anchor="end">1,4</text>
<line x1="1599.8" y1="584.7" x2="2411" y2="584.7" stroke="#929292" stroke-width="1.9"/>
<line x1="1590.8" y1="584.7" x2="1599.8" y2="584.7" stroke="#e0e0e0" stroke-width="1.6"/>
<text x="1589.8" y="592.9000000000001" font-size="20" fill="#d4d4d4" text-anchor="end">1,2</text>
<line x1="1599.8" y1="640.9" x2="2411" y2="640.9" stroke="#929292" stroke-width="1.9"/>
<line x1="1590.8" y1="640.9" x2="1599.8" y2="640.9" stroke="#e0e0e0" stroke-width="1.6"/>
<text x="1589.8" y="649.1" font-size="20" fill="#d4d4d4" text-anchor="end">1</text>
<line x1="1598.8" y1="197.3" x2="2412" y2="197.3" stroke="#9c9c9c" stroke-width="2"/>
<line x1="1598.8" y1="646.1" x2="2412" y2="646.1" stroke="#9c9c9c" stroke-width="2"/>
<line x1="1599.8" y1="197.3" x2="1599.8" y2="646.1" stroke="#9c9c9c" stroke-width="2"/>
<line x1="2411" y1="197.3" x2="2411" y2="646.1" stroke="#9c9c9c" stroke-width="2"/>
<line x1="1599.8" y1="647.1" x2="1599.8" y2="655.1" stroke="#e0e0e0" stroke-width="1.6"/>
<text x="1599.8" y="676.3" font-size="20" fill="#d4d4d4" text-anchor="middle">0</text>
<line x1="1680.7" y1="647.1" x2="1680.7" y2="655.1" stroke="#e0e0e0" stroke-width="1.6"/>
<text x="1680.7" y="676.3" font-size="20" fill="#d4d4d4" text-anchor="middle">10</text>
<line x1="1761.6" y1="647.1" x2="1761.6" y2="655.1" stroke="#e0e0e0" stroke-width="1.6"/>
<text x="1761.6" y="676.3" font-size="20" fill="#d4d4d4" text-anchor="middle">20</text>
<line x1="1842.5" y1="647.1" x2="1842.5" y2="655.1" stroke="#e0e0e0" stroke-width="1.6"/>
<text x="1842.5" y="676.3" font-size="20" fill="#d4d4d4" text-anchor="middle">30</text>
<line x1="1923.4" y1="647.1" x2="1923.4" y2="655.1" stroke="#e0e0e0" stroke-width="1.6"/>
<text x="1923.4" y="676.3" font-size="20" fill="#d4d4d4" text-anchor="middle">40</text>
<line x1="2004.3000000000002" y1="647.1" x2="2004.3000000000002" y2="655.1" stroke="#e0e0e0" stroke-width="1.6"/>
<text x="2004.3000000000002" y="676.3" font-size="20" fill="#d4d4d4" text-anchor="middle">50</text>
<line x1="2085.2000000000003" y1="647.1" x2="2085.2000000000003" y2="655.1" stroke="#e0e0e0" stroke-width="1.6"/>
<text x="2085.2000000000003" y="676.3" font-size="20" fill="#d4d4d4" text-anchor="middle">60</text>
<line x1="2166.1000000000004" y1="647.1" x2="2166.1000000000004" y2="655.1" stroke="#e0e0e0" stroke-width="1.6"/>
<text x="2166.1000000000004" y="676.3" font-size="20" fill="#d4d4d4" text-anchor="middle">70</text>
<line x1="2247.0" y1="647.1" x2="2247.0" y2="655.1" stroke="#e0e0e0" stroke-width="1.6"/>
<text x="2247.0" y="676.3" font-size="20" fill="#d4d4d4" text-anchor="middle">80</text>
<line x1="2327.9" y1="647.1" x2="2327.9" y2="655.1" stroke="#e0e0e0" stroke-width="1.6"/>
<text x="2327.9" y="676.3" font-size="20" fill="#d4d4d4" text-anchor="middle">90</text>
<line x1="2408.8" y1="647.1" x2="2408.8" y2="655.1" stroke="#e0e0e0" stroke-width="1.6"/>
<text x="2408.8" y="676.3" font-size="20" fill="#d4d4d4" text-anchor="middle">100</text>
<text x="1986.5" y="189.6" font-size="19.3" fill="#d4d4d4" text-anchor="middle" textLength="154" lengthAdjust="spacingAndGlyphs">Gamma Log/Log</text>
<clipPath id="gclip"><rect x="1597.8" y="197.3" width="814.2" height="448.8"/></clipPath>
<polyline points="1599.7,560.4 1680.6,311.5 1761.5,307.4 1842.4,308.1 1923.3,305.6 2004.2,306.2 2085.1,305.5 2166.0,305.1 2246.9,313.9 2327.8,327.1 2408.7,281.3" fill="none" stroke="#8a8a8a" stroke-width="3.8" stroke-linejoin="round" clip-path="url(#gclip)"/>
<polyline points="1598.7,559.3 1603.0,519.0 1606.3,476.7 1611.7,462.6 1618.3,445.2 1625.9,425.7 1631.3,414.8 1637.8,403.9 1646.5,390.9 1655.2,378.9 1663.9,369.6 1677.0,358.7 1687.8,351.3 1698.7,345.2 1711.7,338.7 1724.8,333.9 1742.2,328.3 1755.2,324.6 1770.4,320.7 1785.7,317.8 1807.4,314.1 1829.1,311.1 1850.0,308.9 1909.4,301.2 1978.9,295.2 2048.3,291.3 2117.8,288.2 2187.2,285.9 2256.7,284.1 2326.1,282.5 2408.8,280.8" fill="none" stroke="#ffff14" stroke-width="3.8" stroke-linejoin="round" clip-path="url(#gclip)"/>
<text x="223.5" y="735.3" font-size="40" fill="#f4f4f4" textLength="304" lengthAdjust="spacingAndGlyphs" stroke="#f4f4f4" stroke-width=".45">Avg dE2000: 1,3</text>
<text x="804" y="735.3" font-size="40" fill="#f4f4f4" textLength="267" lengthAdjust="spacingAndGlyphs" stroke="#f4f4f4" stroke-width=".45">Avg CCT: 6375</text>
<text x="1334" y="735.3" font-size="40" fill="#f4f4f4" textLength="389.5" lengthAdjust="spacingAndGlyphs" stroke="#f4f4f4" stroke-width=".45">Contrast Ratio: 1479</text>
<text x="1942.5" y="735.3" font-size="40" fill="#f4f4f4" textLength="358.5" lengthAdjust="spacingAndGlyphs" stroke="#f4f4f4" stroke-width=".45">Total Gamma: 2,17</text>
<rect x="102" y="763.5" width="2356.5" height="185" fill="#000"/>
<rect x="448" y="764" width="1810" height="184" fill="#020202"/>
<rect x="478.5" y="773.5" width="137.5" height="142" fill="#000000"/>
<rect x="478.5" y="773.5" width="137.5" height="71" fill="#020203"/>
<rect x="478.5" y="773.5" width="137.5" height="142" fill="none" stroke="#fff" stroke-width="2"/>
<text x="547.2" y="937.3" font-size="17.5" fill="#fff" text-anchor="middle">0</text>
<rect x="641.1" y="773.5" width="137.5" height="142" fill="#1b1b1b"/>
<rect x="641.1" y="773.5" width="137.5" height="71" fill="#151414"/>
<rect x="641.1" y="773.5" width="137.5" height="142" fill="none" stroke="#fff" stroke-width="2"/>
<text x="709.8000000000001" y="937.3" font-size="17.5" fill="#fff" text-anchor="middle">10</text>
<rect x="803.7" y="773.5" width="137.5" height="142" fill="#343434"/>
<rect x="803.7" y="773.5" width="137.5" height="71" fill="#333132"/>
<rect x="803.7" y="773.5" width="137.5" height="142" fill="none" stroke="#fff" stroke-width="2"/>
<text x="872.4000000000001" y="937.3" font-size="17.5" fill="#fff" text-anchor="middle">20</text>
<rect x="966.3" y="773.5" width="137.5" height="142" fill="#4d4d4d"/>
<rect x="966.3" y="773.5" width="137.5" height="71" fill="#4c4c4b"/>
<rect x="966.3" y="773.5" width="137.5" height="142" fill="none" stroke="#fff" stroke-width="2"/>
<text x="1035.0" y="937.3" font-size="17.5" fill="#fff" text-anchor="middle">30</text>
<rect x="1128.9" y="773.5" width="137.5" height="142" fill="#666666"/>
<rect x="1128.9" y="773.5" width="137.5" height="71" fill="#686868"/>
<rect x="1128.9" y="773.5" width="137.5" height="142" fill="none" stroke="#fff" stroke-width="2"/>
<text x="1197.6000000000001" y="937.3" font-size="17.5" fill="#fff" text-anchor="middle">40</text>
<rect x="1291.5" y="773.5" width="137.5" height="142" fill="#808080"/>
<rect x="1291.5" y="773.5" width="137.5" height="71" fill="#858584"/>
<rect x="1291.5" y="773.5" width="137.5" height="142" fill="none" stroke="#fff" stroke-width="2"/>
<text x="1360.2" y="937.3" font-size="17.5" fill="#fff" text-anchor="middle">50</text>
<rect x="1454.1" y="773.5" width="137.5" height="142" fill="#999999"/>
<rect x="1454.1" y="773.5" width="137.5" height="71" fill="#9e9d9b"/>
<rect x="1454.1" y="773.5" width="137.5" height="142" fill="none" stroke="#fff" stroke-width="2"/>
<text x="1522.8" y="937.3" font-size="17.5" fill="#fff" text-anchor="middle">60</text>
<rect x="1616.7" y="773.5" width="137.5" height="142" fill="#b3b3b3"/>
<rect x="1616.7" y="773.5" width="137.5" height="71" fill="#b5b5b3"/>
<rect x="1616.7" y="773.5" width="137.5" height="142" fill="none" stroke="#fff" stroke-width="2"/>
<text x="1685.4" y="937.3" font-size="17.5" fill="#fff" text-anchor="middle">70</text>
<rect x="1779.3" y="773.5" width="137.5" height="142" fill="#cccccc"/>
<rect x="1779.3" y="773.5" width="137.5" height="71" fill="#cecdcb"/>
<rect x="1779.3" y="773.5" width="137.5" height="142" fill="none" stroke="#fff" stroke-width="2"/>
<text x="1848.0" y="937.3" font-size="17.5" fill="#fff" text-anchor="middle">80</text>
<rect x="1941.8999999999999" y="773.5" width="137.5" height="142" fill="#e6e6e6"/>
<rect x="1941.8999999999999" y="773.5" width="137.5" height="71" fill="#e9eae6"/>
<rect x="1941.9" y="773.5" width="137.5" height="142" fill="none" stroke="#fff" stroke-width="2"/>
<text x="2010.6" y="937.3" font-size="17.5" fill="#fff" text-anchor="middle">90</text>
<rect x="2104.5" y="773.5" width="137.5" height="142" fill="#ffffff"/>
<rect x="2104.5" y="773.5" width="137.5" height="71" fill="#fffffd"/>
<rect x="2104.5" y="773.5" width="137.5" height="142" fill="none" stroke="#fff" stroke-width="2"/>
<text x="2173.2" y="937.3" font-size="17.5" fill="#fff" text-anchor="middle">100</text>
<text transform="translate(467 827.5) rotate(-90)" font-size="17" fill="#fff" textLength="48.5" lengthAdjust="spacingAndGlyphs">Actual</text>
<text transform="translate(467 908.5) rotate(-90)" font-size="17" fill="#fff" textLength="47" lengthAdjust="spacingAndGlyphs">Target</text>
<text x="121.5" y="1023.2" font-size="42.5" fill="#f4f4f4" textLength="311.5" lengthAdjust="spacingAndGlyphs" stroke="#f4f4f4" stroke-width=".4">Current Reading</text>
<text x="121.5" y="1084.3" font-size="37" fill="#f4f4f4" textLength="146.5" lengthAdjust="spacingAndGlyphs" stroke="#f4f4f4" stroke-width=".4">x: 0,3151</text>
<text x="121.5" y="1141.9" font-size="37" fill="#f4f4f4" textLength="126.5" lengthAdjust="spacingAndGlyphs" stroke="#f4f4f4" stroke-width=".4">y: 0,332</text>
<text x="121.5" y="1199.4" font-size="37" fill="#f4f4f4" textLength="157.5" lengthAdjust="spacingAndGlyphs" stroke="#f4f4f4" stroke-width=".4">fL: 144,91</text>
<text x="121.5" y="1257.3" font-size="37" fill="#f4f4f4" textLength="226.5" lengthAdjust="spacingAndGlyphs" stroke="#f4f4f4" stroke-width=".4">cd/m²: 496,48</text>
<path d="M563.5 978.5 H976.7 V1282.8 H563.5 Z M573.2 988.7 V1276.8 H967 V988.7 Z" fill="#e8e8e8" fill-rule="evenodd"/>
<rect x="626.6" y="993.4" width="337" height="243.8" fill="none" stroke="#9a9a9a" stroke-width="2"/>
<line x1="617.8" y1="1011.5" x2="625.6" y2="1011.5" stroke="#e0e0e0" stroke-width="1.6"/>
<text x="616.6" y="1020.1" font-size="20.5" fill="#d4d4d4" text-anchor="end" textLength="39" lengthAdjust="spacingAndGlyphs">0,35</text>
<line x1="617.8" y1="1061.2" x2="625.6" y2="1061.2" stroke="#e0e0e0" stroke-width="1.6"/>
<text x="616.6" y="1069.8" font-size="20.5" fill="#d4d4d4" text-anchor="end" textLength="39" lengthAdjust="spacingAndGlyphs">0,34</text>
<line x1="617.8" y1="1110.4" x2="625.6" y2="1110.4" stroke="#e0e0e0" stroke-width="1.6"/>
<text x="616.6" y="1119.0" font-size="20.5" fill="#d4d4d4" text-anchor="end" textLength="39" lengthAdjust="spacingAndGlyphs">0,33</text>
<line x1="617.8" y1="1158.8" x2="625.6" y2="1158.8" stroke="#e0e0e0" stroke-width="1.6"/>
<text x="616.6" y="1167.3999999999999" font-size="20.5" fill="#d4d4d4" text-anchor="end" textLength="39" lengthAdjust="spacingAndGlyphs">0,32</text>
<line x1="617.8" y1="1207.4" x2="625.6" y2="1207.4" stroke="#e0e0e0" stroke-width="1.6"/>
<text x="616.6" y="1216.0" font-size="20.5" fill="#d4d4d4" text-anchor="end" textLength="39" lengthAdjust="spacingAndGlyphs">0,31</text>
<line x1="639.9" y1="1238" x2="639.9" y2="1245" stroke="#e0e0e0" stroke-width="1.6"/>
<text x="639.9" y="1267.4" font-size="20.5" fill="#d4d4d4" text-anchor="middle" textLength="39.5" lengthAdjust="spacingAndGlyphs">0,29</text>
<line x1="707.2" y1="1238" x2="707.2" y2="1245" stroke="#e0e0e0" stroke-width="1.6"/>
<text x="707.2" y="1267.4" font-size="20.5" fill="#d4d4d4" text-anchor="middle" textLength="28.5" lengthAdjust="spacingAndGlyphs">0,3</text>
<line x1="774.6" y1="1238" x2="774.6" y2="1245" stroke="#e0e0e0" stroke-width="1.6"/>
<text x="774.6" y="1267.4" font-size="20.5" fill="#d4d4d4" text-anchor="middle" textLength="39.5" lengthAdjust="spacingAndGlyphs">0,31</text>
<line x1="841.9" y1="1238" x2="841.9" y2="1245" stroke="#e0e0e0" stroke-width="1.6"/>
<text x="841.9" y="1267.4" font-size="20.5" fill="#d4d4d4" text-anchor="middle" textLength="39.5" lengthAdjust="spacingAndGlyphs">0,32</text>
<line x1="909" y1="1238" x2="909" y2="1245" stroke="#e0e0e0" stroke-width="1.6"/>
<text x="909" y="1267.4" font-size="20.5" fill="#d4d4d4" text-anchor="middle" textLength="39.5" lengthAdjust="spacingAndGlyphs">0,33</text>
<clipPath id="cclip"><rect x="627.6" y="994.4" width="335" height="241.8"/></clipPath>
<path d="M668 1238.2 L719.8 1199.8 L765.4 1166.7 L811.1 1133 L856.7 1102.8 L902.4 1072.7 L964 1032.7" fill="none" stroke="#000" stroke-width="3.8" stroke-linejoin="round" clip-path="url(#cclip)"/>
<rect x="784.2" y="1105.2" width="18" height="18" fill="#fff" stroke="#000" stroke-width="1.8"/>
<circle cx="805.8" cy="1124.5" r="6" fill="#1a1a1a" stroke="#000" stroke-width="1.2"/>
<circle cx="801.3" cy="1105.6" r="6" fill="#555" stroke="#000" stroke-width="1.2"/>
<circle cx="810" cy="1109.2" r="6" fill="#3c3c3c" stroke="#000" stroke-width="1.2"/>
<circle cx="815.2" cy="1097.8" r="6" fill="#6e6e6e" stroke="#000" stroke-width="1.2"/>
<circle cx="807.7" cy="1097.3" r="6" fill="#9a9a9a" stroke="#000" stroke-width="1.2"/>
<circle cx="808.6" cy="1102" r="6" fill="#c0c0c0" stroke="#000" stroke-width="1.2"/>
<circle cx="809.6" cy="1099.4" r="4.8" fill="#fff" stroke="#000" stroke-width="1.2"/>
<rect x="987.3" y="960.2" width="1234" height="296.4" fill="#111"/>
<rect x="989.5" y="962.2" width="1229.6" height="39.6" fill="url(#thead)"/>
<text x="1261.4" y="989.6" font-size="20.6" fill="#f2f2f2" text-anchor="end">0</text>
<text x="1364.4" y="989.6" font-size="20.6" fill="#f2f2f2" text-anchor="end">10</text>
<text x="1455.8" y="989.6" font-size="20.6" fill="#f2f2f2" text-anchor="end">20</text>
<text x="1547" y="989.6" font-size="20.6" fill="#f2f2f2" text-anchor="end">30</text>
<text x="1638.2" y="989.6" font-size="20.6" fill="#f2f2f2" text-anchor="end">40</text>
<text x="1729.4" y="989.6" font-size="20.6" fill="#f2f2f2" text-anchor="end">50</text>
<text x="1820.6" y="989.6" font-size="20.6" fill="#f2f2f2" text-anchor="end">60</text>
<text x="1911.8" y="989.6" font-size="20.6" fill="#f2f2f2" text-anchor="end">70</text>
<text x="2003" y="989.6" font-size="20.6" fill="#f2f2f2" text-anchor="end">80</text>
<text x="2094.2" y="989.6" font-size="20.6" fill="#f2f2f2" text-anchor="end">90</text>
<text x="2191.2" y="989.6" font-size="20.6" fill="#f2f2f2" text-anchor="end">100</text>
<rect x="989.5" y="1001.8" width="1229.6" height="36.299999999999955" fill="#424242"/>
<text x="1006" y="1027.8999999999999" font-size="21.2" fill="#f2f2f2" font-weight="bold" textLength="83.5" lengthAdjust="spacingAndGlyphs">x: CIE31</text>
<text x="1209.6" y="1027.8999999999999" font-size="21.5" fill="#f2f2f2">0,25</text>
<text x="1313.5" y="1027.8999999999999" font-size="21.5" fill="#f2f2f2">0,31</text>
<text x="1404.8" y="1027.8999999999999" font-size="21.5" fill="#f2f2f2">0,31</text>
<text x="1496" y="1027.8999999999999" font-size="21.5" fill="#f2f2f2">0,32</text>
<text x="1587.2" y="1027.8999999999999" font-size="21.5" fill="#f2f2f2">0,31</text>
<text x="1678.4" y="1027.8999999999999" font-size="21.5" fill="#f2f2f2">0,32</text>
<text x="1769.6" y="1027.8999999999999" font-size="21.5" fill="#f2f2f2">0,31</text>
<text x="1860.8" y="1027.8999999999999" font-size="21.5" fill="#f2f2f2">0,31</text>
<text x="1952" y="1027.8999999999999" font-size="21.5" fill="#f2f2f2">0,31</text>
<text x="2043.2" y="1027.8999999999999" font-size="21.5" fill="#f2f2f2">0,32</text>
<text x="2134.5" y="1027.8999999999999" font-size="21.5" fill="#f2f2f2">0,32</text>
<rect x="989.5" y="1038.1" width="1229.6" height="36.700000000000045" fill="#848484"/>
<text x="1006" y="1064.1999999999998" font-size="21.2" fill="#f2f2f2" font-weight="bold" textLength="83" lengthAdjust="spacingAndGlyphs">y: CIE31</text>
<text x="1209.6" y="1064.1999999999998" font-size="21.5" fill="#f2f2f2">0,25</text>
<text x="1313.5" y="1064.1999999999998" font-size="21.5" fill="#f2f2f2">0,33</text>
<text x="1404.8" y="1064.1999999999998" font-size="21.5" fill="#f2f2f2">0,33</text>
<text x="1496" y="1064.1999999999998" font-size="21.5" fill="#f2f2f2">0,33</text>
<text x="1587.2" y="1064.1999999999998" font-size="21.5" fill="#f2f2f2">0,33</text>
<text x="1678.4" y="1064.1999999999998" font-size="21.5" fill="#f2f2f2">0,33</text>
<text x="1769.6" y="1064.1999999999998" font-size="21.5" fill="#f2f2f2">0,33</text>
<text x="1860.8" y="1064.1999999999998" font-size="21.5" fill="#f2f2f2">0,33</text>
<text x="1952" y="1064.1999999999998" font-size="21.5" fill="#f2f2f2">0,33</text>
<text x="2043.2" y="1064.1999999999998" font-size="21.5" fill="#f2f2f2">0,33</text>
<text x="2134.5" y="1064.1999999999998" font-size="21.5" fill="#f2f2f2">0,33</text>
<rect x="989.5" y="1074.8" width="1229.6" height="36.40000000000009" fill="#424242"/>
<text x="1006" y="1100.8999999999999" font-size="21.2" fill="#f2f2f2" font-weight="bold" textLength="13.5" lengthAdjust="spacingAndGlyphs">Y</text>
<text x="1209.6" y="1100.8999999999999" font-size="21.5" fill="#f2f2f2">0,34</text>
<text x="1313.5" y="1100.8999999999999" font-size="21.5" fill="#f2f2f2">3,53</text>
<text x="1404.8" y="1100.8999999999999" font-size="21.5" fill="#f2f2f2">14,89</text>
<text x="1496" y="1100.8999999999999" font-size="21.5" fill="#f2f2f2">35,63</text>
<text x="1587.2" y="1100.8999999999999" font-size="21.5" fill="#f2f2f2">67,03</text>
<text x="1678.4" y="1100.8999999999999" font-size="21.5" fill="#f2f2f2">110,23</text>
<text x="1769.6" y="1100.8999999999999" font-size="21.5" fill="#f2f2f2">162,56</text>
<text x="1860.8" y="1100.8999999999999" font-size="21.5" fill="#f2f2f2">226,15</text>
<text x="1952" y="1100.8999999999999" font-size="21.5" fill="#f2f2f2">306,75</text>
<text x="2043.2" y="1100.8999999999999" font-size="21.5" fill="#f2f2f2">399,33</text>
<text x="2134.5" y="1100.8999999999999" font-size="21.5" fill="#f2f2f2">496,48</text>
<rect x="989.5" y="1111.2" width="1229.6" height="36.399999999999864" fill="#848484"/>
<text x="1006" y="1137.3" font-size="21.2" fill="#f2f2f2" font-weight="bold" textLength="88.5" lengthAdjust="spacingAndGlyphs">Target Y</text>
<text x="1209.6" y="1137.3" font-size="21.5" fill="#f2f2f2">0,00</text>
<text x="1313.5" y="1137.3" font-size="21.5" fill="#f2f2f2">5,13</text>
<text x="1404.8" y="1137.3" font-size="21.5" fill="#f2f2f2">16,44</text>
<text x="1496" y="1137.3" font-size="21.5" fill="#f2f2f2">35,88</text>
<text x="1587.2" y="1137.3" font-size="21.5" fill="#f2f2f2">65,97</text>
<text x="1678.4" y="1137.3" font-size="21.5" fill="#f2f2f2">107,17</text>
<text x="1769.6" y="1137.3" font-size="21.5" fill="#f2f2f2">158,15</text>
<text x="1860.8" y="1137.3" font-size="21.5" fill="#f2f2f2">221,03</text>
<text x="1952" y="1137.3" font-size="21.5" fill="#f2f2f2">299,79</text>
<text x="2043.2" y="1137.3" font-size="21.5" fill="#f2f2f2">392,87</text>
<text x="2134.5" y="1137.3" font-size="21.5" fill="#f2f2f2">496,48</text>
<rect x="989.5" y="1147.6" width="1229.6" height="36.30000000000018" fill="#424242"/>
<text x="1006" y="1173.6999999999998" font-size="21.2" fill="#f2f2f2" font-weight="bold" textLength="179.5" lengthAdjust="spacingAndGlyphs">Gamma Log/Log</text>
<text x="1209.6" y="1173.6999999999998" font-size="21.5" fill="#f2f2f2">1,28</text>
<text x="1313.5" y="1173.6999999999998" font-size="21.5" fill="#f2f2f2">2,17</text>
<text x="1404.8" y="1173.6999999999998" font-size="21.5" fill="#f2f2f2">2,18</text>
<text x="1496" y="1173.6999999999998" font-size="21.5" fill="#f2f2f2">2,18</text>
<text x="1587.2" y="1173.6999999999998" font-size="21.5" fill="#f2f2f2">2,19</text>
<text x="1678.4" y="1173.6999999999998" font-size="21.5" fill="#f2f2f2">2,18</text>
<text x="1769.6" y="1173.6999999999998" font-size="21.5" fill="#f2f2f2">2,19</text>
<text x="1860.8" y="1173.6999999999998" font-size="21.5" fill="#f2f2f2">2,19</text>
<text x="1952" y="1173.6999999999998" font-size="21.5" fill="#f2f2f2">2,16</text>
<text x="2043.2" y="1173.6999999999998" font-size="21.5" fill="#f2f2f2">2,11</text>
<text x="2134.5" y="1173.6999999999998" font-size="21.5" fill="#f2f2f2">2,27</text>
<rect x="989.5" y="1183.9" width="1229.6" height="36.399999999999864" fill="#848484"/>
<text x="1006" y="1210.0" font-size="21.2" fill="#f2f2f2" font-weight="bold" textLength="41.5" lengthAdjust="spacingAndGlyphs">CCT</text>
<text x="1209.6" y="1210.0" font-size="21.5" fill="#f2f2f2">20647,00</text>
<text x="1313.5" y="1210.0" font-size="21.5" fill="#f2f2f2">6429,00</text>
<text x="1404.8" y="1210.0" font-size="21.5" fill="#f2f2f2">6376,00</text>
<text x="1496" y="1210.0" font-size="21.5" fill="#f2f2f2">6315,00</text>
<text x="1587.2" y="1210.0" font-size="21.5" fill="#f2f2f2">6421,00</text>
<text x="1678.4" y="1210.0" font-size="21.5" fill="#f2f2f2">6354,00</text>
<text x="1769.6" y="1210.0" font-size="21.5" fill="#f2f2f2">6386,00</text>
<text x="1860.8" y="1210.0" font-size="21.5" fill="#f2f2f2">6380,00</text>
<text x="1952" y="1210.0" font-size="21.5" fill="#f2f2f2">6374,00</text>
<text x="2043.2" y="1210.0" font-size="21.5" fill="#f2f2f2">6356,00</text>
<text x="2134.5" y="1210.0" font-size="21.5" fill="#f2f2f2">6355,00</text>
<rect x="989.5" y="1220.3" width="1229.6" height="36.100000000000136" fill="#424242"/>
<text x="1006" y="1246.3999999999999" font-size="21.2" fill="#f2f2f2" font-weight="bold" textLength="87.5" lengthAdjust="spacingAndGlyphs">ΔE 2000</text>
<text x="1209.6" y="1246.3999999999999" font-size="21.5" fill="#f2f2f2">0,94</text>
<text x="1313.5" y="1246.3999999999999" font-size="21.5" fill="#f2f2f2">1,81</text>
<text x="1404.8" y="1246.3999999999999" font-size="21.5" fill="#f2f2f2">0,93</text>
<text x="1496" y="1246.3999999999999" font-size="21.5" fill="#f2f2f2">0,81</text>
<text x="1587.2" y="1246.3999999999999" font-size="21.5" fill="#f2f2f2">0,63</text>
<text x="1678.4" y="1246.3999999999999" font-size="21.5" fill="#f2f2f2">1,19</text>
<text x="1769.6" y="1246.3999999999999" font-size="21.5" fill="#f2f2f2">1,01</text>
<text x="1860.8" y="1246.3999999999999" font-size="21.5" fill="#f2f2f2">1,19</text>
<text x="1952" y="1246.3999999999999" font-size="21.5" fill="#f2f2f2">1,72</text>
<text x="2043.2" y="1246.3999999999999" font-size="21.5" fill="#f2f2f2">1,83</text>
<text x="2134.5" y="1246.3999999999999" font-size="21.5" fill="#f2f2f2">1,60</text>
<rect x="0" y="1283.2" width="2549" height="97" fill="#2b2b2b"/>
<rect x="1.3" y="1287" width="185.5" height="91.5" rx="6" fill="url(#lvb)"/>
<rect x="9.3" y="1295.2" width="169.4" height="53.6" rx="4.5" fill="#000000" stroke="#5a5a5a" stroke-opacity="0.55" stroke-width="1.6"/>
<text x="94.0" y="1372.3" font-size="15.5" fill="#222222" text-anchor="middle" font-weight="bold">0</text>
<rect x="189.8" y="1287" width="185.5" height="91.5" rx="6" fill="url(#lvb)"/>
<rect x="197.8" y="1295.2" width="169.4" height="53.6" rx="4.5" fill="#1a1a1a" stroke="#5a5a5a" stroke-opacity="0.55" stroke-width="1.6"/>
<text x="282.47" y="1372.3" font-size="15.5" fill="#222222" text-anchor="middle" font-weight="bold">10</text>
<rect x="378.2" y="1287" width="185.5" height="91.5" rx="6" fill="url(#lvb)"/>
<rect x="386.2" y="1295.2" width="169.4" height="53.6" rx="4.5" fill="#333333" stroke="#5a5a5a" stroke-opacity="0.55" stroke-width="1.6"/>
<text x="470.94" y="1372.3" font-size="15.5" fill="#222222" text-anchor="middle" font-weight="bold">20</text>
<rect x="566.7" y="1287" width="185.5" height="91.5" rx="6" fill="url(#lvb)"/>
<rect x="574.7" y="1295.2" width="169.4" height="53.6" rx="4.5" fill="#4d4d4d" stroke="#5a5a5a" stroke-opacity="0.55" stroke-width="1.6"/>
<text x="659.41" y="1372.3" font-size="15.5" fill="#222222" text-anchor="middle" font-weight="bold">30</text>
<rect x="755.2" y="1287" width="185.5" height="91.5" rx="6" fill="url(#lvb)"/>
<rect x="763.2" y="1295.2" width="169.4" height="53.6" rx="4.5" fill="#666666" stroke="#5a5a5a" stroke-opacity="0.55" stroke-width="1.6"/>
<text x="847.88" y="1372.3" font-size="15.5" fill="#222222" text-anchor="middle" font-weight="bold">40</text>
<rect x="943.6" y="1287" width="185.5" height="91.5" rx="6" fill="url(#lvb)"/>
<rect x="951.6" y="1295.2" width="169.4" height="53.6" rx="4.5" fill="#808080" stroke="#5a5a5a" stroke-opacity="0.55" stroke-width="1.6"/>
<text x="1036.35" y="1372.3" font-size="15.5" fill="#222222" text-anchor="middle" font-weight="bold">50</text>
<rect x="1132.1" y="1287" width="185.5" height="91.5" rx="6" fill="url(#lvb)"/>
<rect x="1140.1" y="1295.2" width="169.4" height="53.6" rx="4.5" fill="#999999" stroke="#5a5a5a" stroke-opacity="0.55" stroke-width="1.6"/>
<text x="1224.82" y="1372.3" font-size="15.5" fill="#222222" text-anchor="middle" font-weight="bold">60</text>
<rect x="1320.6" y="1287" width="185.5" height="91.5" rx="6" fill="url(#lvb)"/>
<rect x="1328.6" y="1295.2" width="169.4" height="53.6" rx="4.5" fill="#b3b3b3" stroke="#5a5a5a" stroke-opacity="0.55" stroke-width="1.6"/>
<text x="1413.29" y="1372.3" font-size="15.5" fill="#222222" text-anchor="middle" font-weight="bold">70</text>
<rect x="1509.1" y="1287" width="185.5" height="91.5" rx="6" fill="url(#lvb)"/>
<rect x="1517.1" y="1295.2" width="169.4" height="53.6" rx="4.5" fill="#cccccc" stroke="#5a5a5a" stroke-opacity="0.55" stroke-width="1.6"/>
<text x="1601.76" y="1372.3" font-size="15.5" fill="#222222" text-anchor="middle" font-weight="bold">80</text>
<rect x="1697.5" y="1287" width="185.5" height="91.5" rx="6" fill="url(#lvb)"/>
<rect x="1705.5" y="1295.2" width="169.4" height="53.6" rx="4.5" fill="#e6e6e6" stroke="#5a5a5a" stroke-opacity="0.55" stroke-width="1.6"/>
<text x="1790.23" y="1372.3" font-size="15.5" fill="#222222" text-anchor="middle" font-weight="bold">90</text>
<rect x="1886.0" y="1287" width="185.5" height="91.5" rx="6" fill="#1c1c1c"/>
<rect x="1894.0" y="1295.2" width="169.4" height="53.6" rx="4.5" fill="#ffffff" stroke="#222" stroke-opacity="1" stroke-width="1.6"/>
<text x="1978.7" y="1372.3" font-size="15.5" fill="#fff" text-anchor="middle" font-weight="bold">100</text>
<path d="M2075.5 1372.5 V1293 Q2075.5 1287 2081.5 1287 H2142 Q2148 1287 2148 1293 V1372.5 Q2148 1378.5 2142 1378.5 H2081.5 Q2075.5 1378.5 2075.5 1372.5 Z" fill="url(#lvb)"/>
<line x1="2075.5" y1="1314.5" x2="2148" y2="1314.5" stroke="#4a4a4a" stroke-width="1.2"/>
<circle cx="2111.4" cy="1299.4" r="11" fill="url(#bcirc)"/>
<path d="M2104.8 1303 L2111.4 1296 L2118 1303 Z" fill="#333"/>
<rect x="2090.3" y="1325.2" width="42" height="42.5" rx="6" fill="url(#stopin)" stroke="#303030" stroke-width="3"/>
<rect x="2101" y="1337" width="20.8" height="19.8" fill="#000"/>
<rect x="2149.5" y="1287" width="339" height="44.8" fill="url(#bbtn)"/>
<line x1="2218.3" y1="1287" x2="2218.3" y2="1331.8" stroke="#303030" stroke-width="1.6"/>
<line x1="2286.4" y1="1287" x2="2286.4" y2="1331.8" stroke="#303030" stroke-width="1.6"/>
<line x1="2353.1" y1="1287" x2="2353.1" y2="1331.8" stroke="#303030" stroke-width="1.6"/>
<line x1="2420.6" y1="1287" x2="2420.6" y2="1331.8" stroke="#303030" stroke-width="1.6"/>
<circle cx="2183.2" cy="1309.3" r="14.6" fill="url(#bcirc)"/>
<circle cx="2252.4" cy="1309.3" r="14.6" fill="url(#bcirc)"/>
<circle cx="2319.9" cy="1309.3" r="14.6" fill="url(#bcirc)"/>
<circle cx="2387.1" cy="1309.3" r="14.6" fill="url(#bcirc)"/>
<circle cx="2454.6" cy="1309.3" r="14.6" fill="url(#bcirc)"/>
<rect x="2177.4" y="1303.5" width="11.6" height="11.6" fill="#3a3a3a"/>
<path d="M2247.6 1302.3 L2260 1309.3 L2247.6 1316.3 Z" fill="#3a3a3a"/>
<path d="M2315.2 1302.6 H2311.6 V1316 H2315.2 M2324.6 1302.6 H2328.2 V1316 H2324.6" fill="none" stroke="#3a3a3a" stroke-width="2.8"/>
<path d="M2315.6 1309.6 H2318.8 M2321 1309.6 H2324.2" stroke="#3a3a3a" stroke-width="2.8"/>
<path d="M2387.1 1309.3 C2384 1305 2378.6 1305 2378.6 1309.3 C2378.6 1313.6 2384 1313.6 2387.1 1309.3 C2390.2 1305 2395.6 1305 2395.6 1309.3 C2395.6 1313.6 2390.2 1313.6 2387.1 1309.3 Z" fill="none" stroke="#3a3a3a" stroke-width="2.3"/>
<path d="M2447.6 1308 A7.2 7.2 0 0 1 2460 1305 M2461.6 1310.6 A7.2 7.2 0 0 1 2449.2 1313.6" fill="none" stroke="#3a3a3a" stroke-width="2.8"/>
<path d="M2462.6 1300.6 V1307.6 H2455.6 Z M2446.6 1318 V1311 H2453.6 Z" fill="#3a3a3a"/>
<rect x="2488.5" y="1287" width="61" height="44.8" fill="#383838"/>
<circle cx="2524.2" cy="1309.3" r="14.6" fill="url(#dkc)"/>
<rect x="2149.5" y="1333.3" width="400" height="45.2" fill="url(#bbtn2)"/>
<line x1="2149.5" y1="1332.6" x2="2549" y2="1332.6" stroke="#3c3c3c" stroke-width="1.4"/>
<line x1="2353.1" y1="1333.3" x2="2353.1" y2="1378.5" stroke="#303030" stroke-width="1.6"/>
<circle cx="2195.2" cy="1355.8" r="14.4" fill="url(#bcirc)"/>
<circle cx="2515" cy="1355.8" r="14.4" fill="url(#bcirc)"/>
<path d="M2194.6 1349.6 L2189.4 1355.8 L2194.6 1362 M2200.8 1349.6 L2195.6 1355.8 L2200.8 1362" fill="none" stroke="#3a3a3a" stroke-width="2"/>
<path d="M2509.6 1349.6 L2514.8 1355.8 L2509.6 1362 M2515.8 1349.6 L2521 1355.8 L2515.8 1362" fill="none" stroke="#3a3a3a" stroke-width="2"/>
<text x="2235.5" y="1368.2" font-size="33.5" fill="#2e2e2e" textLength="75" lengthAdjust="spacingAndGlyphs" filter="url(#blur1)" stroke="#2e2e2e" stroke-width=".6">Back</text>
<text x="2395.7" y="1368.2" font-size="33.5" fill="#2e2e2e" textLength="76.5" lengthAdjust="spacingAndGlyphs" filter="url(#blur1)" stroke="#2e2e2e" stroke-width=".6">Next</text>
</svg>
</body></html>
